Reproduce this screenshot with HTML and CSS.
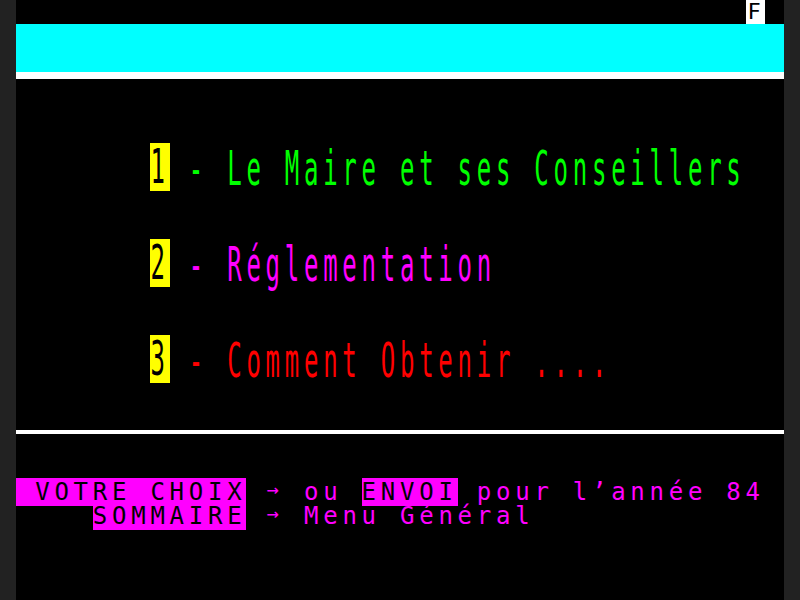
FILE: index.html
```html
<!DOCTYPE html>
<html lang="fr">
<head>
<meta charset="utf-8">
<title>Minitel - Mairie</title>
<link rel="stylesheet" href="styles.css">
</head>
<body>
<main class="screen">
  <div class="row status"><span class="status-f">F</span></div>
  <div class="banner"></div>
  <div class="rule-top"></div>
  <div class="gap-top"></div>

  <div class="item green"><span class="dbl"><span class="num">1</span> - Le Maire et ses Conseillers</span></div>
  <div class="gap"></div>
  <div class="item magenta"><span class="dbl"><span class="num">2</span> - Réglementation</span></div>
  <div class="gap"></div>
  <div class="item red"><span class="dbl"><span class="num">3</span> - Comment Obtenir ....</span></div>

  <div class="gap-rule"></div>
  <div class="rule-bottom"></div>
  <div class="gap-foot"></div>

  <div class="row foot magenta"><span class="inv"> VOTRE CHOIX</span> <span class="arrow">→</span> ou <span class="inv">ENVOI</span> pour l’année 84</div>
  <div class="row foot magenta indent-4"><span class="inv">SOMMAIRE</span> <span class="arrow">→</span> Menu Général</div>
</main>
</body>
</html>
```

FILE: styles.css
```css
:root {
  --col: 19.2px;
}

html, body {
  margin: 0;
  padding: 0;
  background: #222222;
  height: 600px;
  overflow: hidden;
}

.screen {
  width: 768px;
  height: 600px;
  margin: 0 auto;
  background: #000000;
  font-family: "DejaVu Sans Mono", "Liberation Mono", monospace;
  font-size: 24px;
  line-height: 24px;
  letter-spacing: 4.75px;
  color: #ffffff;
}

.row {
  height: 24px;
  white-space: pre;
}

.status {
  display: flex;
  padding-left: calc(38 * var(--col));
}

.status-f {
  display: inline-block;
  width: var(--col);
  height: 24px;
  background: #ffffff;
  color: #000000;
  font-size: 22px;
  text-indent: 2px;
  letter-spacing: 0;
}

.banner {
  height: 48px;
  background: #00ffff;
}

.rule-top {
  height: 7px;
  background: #ffffff;
}

.gap-top {
  height: 65px;
}

.gap {
  height: 48px;
}

.item {
  height: 48px;
  white-space: pre;
  padding-left: calc(7 * var(--col));
}

.dbl {
  display: inline-block;
  height: 24px;
  transform: scaleY(2);
  transform-origin: 0 0;
  position: relative;
  top: 1px;
}

.num {
  display: inline-block;
  width: var(--col);
  height: 24px;
  background: #ffff00;
  color: #000000;
  margin-top: -1px;
  vertical-align: top;
  line-height: 25px;
}

.green { color: #00ff00; }
.magenta { color: #ff00ff; }
.red { color: #ff0000; }

.gap-rule {
  height: 46px;
}

.rule-bottom {
  height: 4px;
  background: #ffffff;
}

.gap-foot {
  height: 46px;
}

.foot .inv {
  background: #ff00ff;
  color: #000000;
}

.arrow {
  display: inline-block;
  width: var(--col);
  font-size: 20px;
  letter-spacing: 0;
  text-indent: 1px;
  position: relative;
  top: -4px;
}

.indent-4 {
  padding-left: calc(4 * var(--col));
}
```
